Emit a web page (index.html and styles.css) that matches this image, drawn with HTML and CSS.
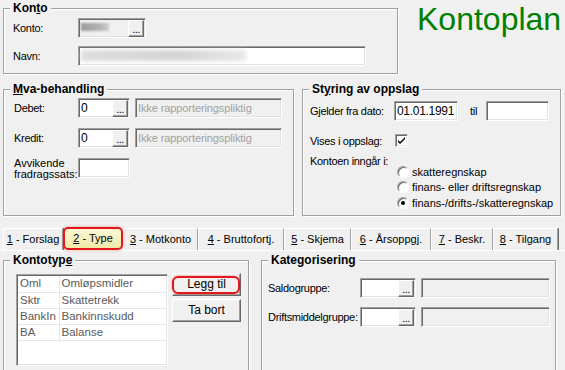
FILE: index.html
```html
<!DOCTYPE html>
<html lang="no">
<head>
  <meta charset="UTF-8">
  <title>Kontoplan</title>
  <link rel="stylesheet" href="styles.css">
</head>
<body>

<div class="top">
  <div class="group konto">
    <span class="gtitle">Kon<u>t</u>o</span>
    <span class="lbl">Konto:</span>
    <div class="field lookup ro w68"><span class="val"><i class="blur1"></i></span><span class="dots">...</span></div>
    <span class="lbl">Navn:</span>
    <div class="field w288"><i class="blur2"></i></div>
  </div>
  <h1 class="title">Kontoplan</h1>
</div>

<div class="mid">
  <div class="group mva">
    <span class="gtitle"><u>M</u>va-behandling</span>
    <span class="lbl">Debet:</span>
    <div class="pair">
      <div class="field lookup w52"><span class="val">0</span><span class="dots">...</span></div>
      <div class="field disp w147">Ikke rapporteringspliktig</div>
    </div>
    <span class="lbl">Kredit:</span>
    <div class="pair">
      <div class="field lookup w52"><span class="val">0</span><span class="dots">...</span></div>
      <div class="field disp w147">Ikke rapporteringspliktig</div>
    </div>
    <span class="lbl two">Avvikende<br>fradragssats:</span>
    <div class="field w52"></div>
  </div>

  <div class="group styring">
    <span class="gtitle">St<u>y</u>ring av oppslag</span>
    <div class="srow">
      <span class="slbl">Gjelder fra dato:</span>
      <div class="field w64"><span class="val">01.01.1991</span></div>
      <span class="til">til</span>
      <div class="field w63"></div>
    </div>
    <div class="srow chk">
      <span class="slbl">Vises i oppslag:</span>
      <span class="check">
        <svg width="11" height="11" viewBox="0 0 11 11"><path d="M2 5 L4 7 L9 2 L9 4 L4 9 L2 7 Z" fill="#000"/></svg>
      </span>
    </div>
    <div class="inngar">Kontoen inngår i:</div>
    <ul class="radios">
      <li><span class="radio"></span>skatteregnskap</li>
      <li><span class="radio"></span>finans- eller driftsregnskap</li>
      <li><span class="radio on"></span>finans-/drifts-/skatteregnskap</li>
    </ul>
  </div>
</div>

<div class="tabs">
  <div class="tab t1"><u>1</u> - Forslag</div>
  <div class="tab t2 sel"><u>2</u> - Type</div>
  <div class="tab t3"><u>3</u> - Motkonto</div>
  <div class="tab t4"><u>4</u> - Bruttofortj.</div>
  <div class="tab t5"><u>5</u> - Skjema</div>
  <div class="tab t6"><u>6</u> - Årsoppgj.</div>
  <div class="tab t7"><u>7</u> - Beskr.</div>
  <div class="tab t8"><u>8</u> - Tilgang</div>
</div>

<div class="panel">
  <div class="group kontotype">
    <span class="gtitle">Kontotyp<u>e</u></span>
    <div class="list">
      <table>
        <tr><td>Oml</td><td>Omløpsmidler</td></tr>
        <tr><td>Sktr</td><td>Skattetrekk</td></tr>
        <tr><td>BankIn</td><td>Bankinnskudd</td></tr>
        <tr><td>BA</td><td>Balanse</td></tr>
      </table>
    </div>
    <div class="btns">
      <div class="btn mark">Legg til</div>
      <div class="btn">Ta bort</div>
    </div>
  </div>

  <div class="group kat">
    <span class="gtitle">Kategorisering</span>
    <span class="lbl">Saldogruppe:</span>
    <div class="pair">
      <div class="field lookup w56"><span class="val"></span><span class="dots">...</span></div>
      <div class="field disp w129"></div>
    </div>
    <span class="lbl">Driftsmiddelgruppe:</span>
    <div class="pair">
      <div class="field lookup w56"><span class="val"></span><span class="dots">...</span></div>
      <div class="field disp w129"></div>
    </div>
  </div>
</div>

</body>
</html>
```

FILE: styles.css
```css
* {
  box-sizing: border-box;
}
body {
  margin: 0;
  width: 565px;
  height: 370px;
  overflow: hidden;
  background: #f0f0f0;
  font: 11px "Liberation Sans", Arial, sans-serif;
  letter-spacing: -0.3px;
  color: #000;
}

/* group boxes */
.group {
  position: relative;
  border: 1px solid #a0a0a0;
  box-shadow: inset 1px 1px 0 #fff, 1px 1px 0 #fff;
}
.gtitle {
  position: absolute;
  top: -8px;
  left: 6px;
  padding: 0 3px;
  background: #f0f0f0;
  font-size: 12px;
  font-weight: bold;
  line-height: 14px;
  letter-spacing: 0;
}
.lbl {
  line-height: 20px;
  white-space: nowrap;
}
.lbl.two {
  line-height: 11px;
  align-self: center;
  letter-spacing: 0;
}

/* fields */
.field {
  height: 20px;
  border: 1px solid;
  border-color: #a0a0a0 #fff #fff #a0a0a0;
  box-shadow: inset 1px 1px 0 #696969, inset -1px -1px 0 #e3e3e3;
  background: #fff;
  font-size: 12px;
  line-height: 18px;
  padding-left: 2px;
  overflow: hidden;
  white-space: nowrap;
}
.field.ro {
  background: #f0f0f0;
}
.field.disp {
  background: #f0f0f0;
  color: #a0a0a0;
  font-size: 11px;
  letter-spacing: -0.1px;
}
.lookup {
  display: flex;
  padding: 1px 1px 1px 0;
}
.lookup .val {
  flex: 1;
  padding-left: 2px;
  line-height: 16px;
}
.dots {
  width: 16px;
  height: 17px;
  border: 1px solid;
  border-color: #fff #696969 #696969 #fff;
  box-shadow: inset -1px -1px 0 #a0a0a0;
  background: #f0f0f0;
  font-size: 11px;
  line-height: 17px;
  text-align: center;
  letter-spacing: -0.5px;
}
.pair {
  display: flex;
  gap: 5px;
}
.w52 { width: 52px; }
.w56 { width: 56px; }
.w63 { width: 63px; }
.w64 { width: 64px; }
.w68 { width: 68px; }
.w129 { width: 129px; }
.w147 { width: 147px; }
.w288 { width: 288px; }

.blur1 {
  display: block;
  width: 28px;
  height: 8px;
  margin-top: 3px;
  background: linear-gradient(90deg, #9a9a9a, #b4b4b4 70%, #cfcfcf);
  filter: blur(0.8px);
}
.blur2 {
  display: block;
  width: 165px;
  height: 11px;
  margin-top: 3px;
  background: linear-gradient(90deg, #dcdcdc, #d4d4d4 60%, #e8e8e8);
  filter: blur(2px);
}

/* top row */
.top {
  display: flex;
  align-items: flex-start;
}
.konto {
  margin: 8px 0 0 3px;
  width: 395px;
  height: 66px;
  padding: 9px 0 0 9px;
  display: grid;
  grid-template-columns: 65px auto;
  row-gap: 8px;
  align-content: start;
  justify-items: start;
}
.title {
  margin: 3px 0 0 19px;
  font-size: 32px;
  font-weight: normal;
  line-height: 32px;
  letter-spacing: 0;
  color: #008000;
}

/* middle row */
.mid {
  display: flex;
  margin: 15px 0 0 3px;
}
.mva {
  width: 291px;
  height: 127px;
  padding: 8px 0 0 10px;
  display: grid;
  grid-template-columns: 64px auto;
  row-gap: 10px;
  align-content: start;
  justify-items: start;
}
.styring {
  margin-left: 8px;
  width: 259px;
  height: 127px;
  padding: 10px 0 0 7px;
}
.srow {
  display: flex;
  align-items: center;
  height: 21px;
}
.slbl {
  width: 84px;
  white-space: nowrap;
}
.til {
  width: 28px;
  padding-left: 12px;
}
.srow.chk {
  margin-top: 13px;
  height: 13px;
}
.check {
  width: 13px;
  height: 13px;
  margin-left: 1px;
  border: 1px solid;
  border-color: #a0a0a0 #fff #fff #a0a0a0;
  box-shadow: inset 1px 1px 0 #696969, inset -1px -1px 0 #e3e3e3;
  background: #fff;
}
.check svg {
  display: block;
}
.inngar {
  margin-top: 8px;
  line-height: 12px;
}
.radios {
  list-style: none;
  margin: -3px 0 0;
  padding: 0 0 0 87px;
  letter-spacing: 0;
}
.radios li {
  display: flex;
  align-items: center;
  height: 15.5px;
  white-space: nowrap;
}
.radio {
  width: 12px;
  height: 12px;
  margin-right: 3px;
  border-radius: 50%;
  border: 1px solid;
  border-color: #a0a0a0 #fff #fff #a0a0a0;
  box-shadow: inset 1px 1px 0 #696969;
  background: #fff;
  position: relative;
}
.radio.on::after {
  content: "";
  position: absolute;
  left: 3px;
  top: 3px;
  width: 4px;
  height: 4px;
  border-radius: 50%;
  background: #000;
}

/* tabs */
.tabs {
  display: flex;
  margin: 12px 0 0 3px;
  height: 22px;
}
.tab {
  height: 22px;
  line-height: 21px;
  text-align: center;
  white-space: nowrap;
  letter-spacing: 0;
  border-left: 1px solid #fff;
  border-top: 1px solid #fff;
  border-right: 1px solid #a0a0a0;
  box-shadow: 1px 0 0 #696969;
}
.t1 { width: 60px; }
.t2 { width: 60px; }
.t3 { width: 75px; }
.t4 { width: 86px; }
.t5 { width: 67px; }
.t6 { width: 80px; }
.t7 { width: 62px; }
.t8 { width: 65px; }
.tab.sel {
  margin-top: -1px;
  height: 23px;
  border: 2px solid #e3161c;
  border-radius: 5px;
  background: linear-gradient(#fbf9d6, #efe9a6);
  box-shadow: 0 0 3px rgba(230, 30, 30, 0.45);
  line-height: 19px;
  position: relative;
  z-index: 1;
}

/* tab panel */
.panel {
  display: flex;
  border-top: 1px solid #fff;
  padding-top: 9px;
}
.kontotype {
  margin-left: 3px;
  width: 246px;
  height: 112px;
  padding: 13px 0 0 12px;
  display: flex;
  gap: 4px;
  align-items: flex-start;
}
.list {
  width: 152px;
  height: 92px;
  border: 1px solid;
  border-color: #a0a0a0 #fff #fff #a0a0a0;
  box-shadow: inset 1px 1px 0 #696969, inset -1px -1px 0 #e3e3e3;
  background: #fff;
  padding: 1px;
}
.list table {
  border-collapse: collapse;
  width: 149px;
}
.list td {
  height: 16px;
  padding: 0 0 0 2px;
  border-right: 1px solid #e6e6e6;
  border-bottom: 1px solid #e6e6e6;
  color: #5a5a5a;
  font-size: 11.5px;
  letter-spacing: 0;
  line-height: 15px;
}
.list td:first-child {
  width: 41px;
}
.btns {
  display: flex;
  flex-direction: column;
  gap: 3px;
  margin-top: -1px;
}
.btn {
  position: relative;
  width: 69px;
  height: 23px;
  border: 1px solid;
  border-color: #fff #696969 #696969 #fff;
  box-shadow: inset -1px -1px 0 #a0a0a0;
  background: #f0f0f0;
  font-size: 12px;
  line-height: 21px;
  text-align: center;
  letter-spacing: 0;
}
.btn.mark::after {
  content: "";
  position: absolute;
  top: 2px;
  bottom: 1px;
  left: -1px;
  right: 0;
  border: 2px solid #e3161c;
  border-radius: 6px;
  box-shadow: 0 0 2px rgba(230, 30, 30, 0.5);
}
.kat {
  margin-left: 12px;
  width: 295px;
  height: 112px;
  padding: 17px 0 0 6px;
  display: grid;
  grid-template-columns: 92px auto;
  row-gap: 9px;
  align-content: start;
  justify-items: start;
}
```
